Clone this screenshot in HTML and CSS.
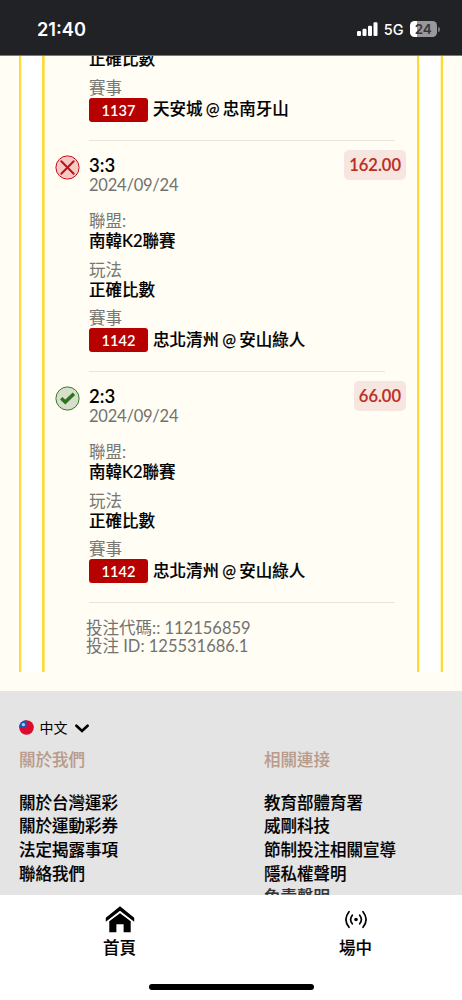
FILE: index.html
```html
<!DOCTYPE html>
<html lang="zh-Hant">
<head>
<meta charset="utf-8">
<title>投注紀錄</title>
<link rel="stylesheet" href="styles.css">
</head>
<body>
<div class="phone">
  <header class="status">
    <span class="clock">21:40</span>
    <div class="indicators">
      <svg class="signal" width="21" height="14" viewBox="0 0 21 14" fill="#fff"><rect x="0" y="9" width="4" height="5" rx="1.1"/><rect x="5.5" y="6.8" width="4" height="7.2" rx="1.1"/><rect x="11" y="3.8" width="4" height="10.2" rx="1.1"/><rect x="16.5" y="0.3" width="4" height="13.7" rx="1.1"/></svg>
      <span class="network">5G</span>
      <div class="battery"><span>24</span></div><i class="battery-cap"></i>
    </div>
  </header>
  <main class="page">
    <section class="outer"><div class="inner">
      <article class="bet first">
        <div class="value">正確比數</div>
        <div class="label">賽事</div>
        <div class="match"><span class="code">1137</span><span>天安城 @ 忠南牙山</span></div>
      </article>
      <hr class="rule">
      <article class="bet">
        <div class="head">
          <svg class="mark" width="25" height="25" viewBox="0 0 25 25" fill="none"><circle cx="12.5" cy="12.5" r="11.6" fill="#f5cac6" stroke="#bd1118"/><path d="M6.3 6.3 18.7 18.7M18.7 6.3 6.3 18.7" stroke="#bd1118" stroke-width="2" stroke-linecap="round"/></svg>
          <div class="pick"><div class="score">3:3</div><div class="date">2024/09/24</div></div>
          <span class="odds">162.00</span>
        </div>
        <div class="label">聯盟:</div><div class="value">南韓K2聯賽</div>
        <div class="label">玩法</div><div class="value">正確比數</div>
        <div class="label">賽事</div>
        <div class="match"><span class="code">1142</span><span>忠北清州 @ 安山綠人</span></div>
      </article>
      <hr class="rule short">
      <article class="bet">
        <div class="head">
          <svg class="mark" width="25" height="25" viewBox="0 0 25 25" fill="none"><circle cx="12.5" cy="12.5" r="11.6" fill="#d6dfca" stroke="#347c28"/><path d="M6.2 12.3 10.3 16 18.9 7.8" stroke="#2b741d" stroke-width="3.5"/></svg>
          <div class="pick"><div class="score">2:3</div><div class="date">2024/09/24</div></div>
          <span class="odds">66.00</span>
        </div>
        <div class="label">聯盟:</div><div class="value">南韓K2聯賽</div>
        <div class="label">玩法</div><div class="value">正確比數</div>
        <div class="label">賽事</div>
        <div class="match"><span class="code">1142</span><span>忠北清州 @ 安山綠人</span></div>
      </article>
      <hr class="rule">
      <div class="ids"><div>投注代碼:: 112156859</div><div>投注 ID: 125531686.1</div></div>
    </div></section>
    <footer class="footer">
      <div class="lang">
        <svg width="15" height="15" viewBox="0 0 15 15"><circle cx="7.5" cy="7.5" r="7.3" fill="#dc0a2d"/><path d="M7.5 .2V7.5H.2A7.3 7.3 0 0 1 7.5 .2Z" fill="#1559b5"/><circle cx="4.4" cy="4.6" r="1.7" fill="#a9cdf0"/></svg>
        <span>中文</span>
        <svg class="chevron" width="14" height="9" viewBox="0 0 14 9"><path d="M1.4 1.7 7 7 12.6 1.7" fill="none" stroke="#000" stroke-width="2.6" stroke-linecap="round"/></svg>
      </div>
      <div class="columns">
        <div><h2>關於我們</h2><ul><li>關於台灣運彩</li><li>關於運動彩券</li><li>法定揭露事項</li><li>聯絡我們</li></ul></div>
        <div><h2>相關連接</h2><ul><li>教育部體育署</li><li>威剛科技</li><li>節制投注相關宣導</li><li>隱私權聲明</li><li class="faded">免責聲明</li></ul></div>
      </div>
    </footer>
  </main>
  <nav class="tabs">
    <div class="tabrow">
      <div class="tab home">
        <svg width="30" height="27" viewBox="0 0 30 27"><path d="M.8 11.8 15 .3 29.2 11.8V15.7L15 4.7.8 15.7Z"/><path d="M4.3 15.2 15 7.2 25.7 15.2V26.2H18.6V18.2H11.4V26.2H4.3Z"/></svg>
        <span>首頁</span>
      </div>
      <div class="tab live">
        <svg width="24" height="27" viewBox="0 0 24 27" fill="none" stroke="#000" stroke-width="1.7" stroke-linecap="round"><circle cx="12" cy="13.5" r="1.8" fill="#000" stroke="none"/><path d="M8.3 9.2Q4.9 13.5 8.3 17.8M15.7 9.2Q19.1 13.5 15.7 17.8M5 5.7Q-1.2 13.5 5 21.3M19 5.7Q25.2 13.5 19 21.3"/></svg>
        <span>場中</span>
      </div>
    </div>
    <div class="indicator"></div>
  </nav>
</div>
</body>
</html>
```
FILE: styles.css
```css
* { box-sizing: border-box; }
body { margin: 0; font-family: Lato, "Noto Sans CJK TC", sans-serif; font-size: 16.5px; color: #000; }
.phone { width: 462px; height: 1000px; display: flex; flex-direction: column; overflow: hidden; background: #fffdf4; }
.status { flex: none; height: 56px; background: #212226; border-bottom: 1px solid #77777a; display: flex; justify-content: space-between; align-items: flex-start; padding: 17px 22px 0 37px; color: #fff; font-family: Inter, sans-serif; }
.clock { font-size: 18.2px; line-height: 25px; font-weight: 600; }
.indicators { display: flex; align-items: center; height: 24px; }
.network { font-size: 14.5px; font-weight: 500; margin: 1px 6px 0 6px; }
.battery { width: 27.5px; height: 16px; border-radius: 4.5px; background: linear-gradient(90deg, #fff 7px, #99999b 7px); color: #35363a; font-size: 13.5px; line-height: 16px; font-weight: 600; text-align: center; }
.battery-cap { width: 2px; height: 5px; margin-left: 1px; background: #77777a; border-radius: 0 2px 2px 0; }
.page { flex: 1; min-height: 0; overflow: hidden; display: flex; flex-direction: column; }
.outer { flex: none; height: 616px; margin: 0 19px; padding: 0 22px 0 21px; background: #fff; border: solid #ffdb35; border-width: 0 2px; box-shadow: inset .5px 0 #ffe98a, inset -.5px 0 #ffe98a; overflow: hidden; }
.inner { height: 100%; background: #fffdf4; border: solid #ffdb35; border-width: 0 2px; box-shadow: .5px 0 #ffe98a, inset 1px 0 #ffe37a; padding: 0 11px 0 45px; }
.bet { height: 230px; padding-top: 9px; }
.first { height: 84px; padding: 0; overflow: hidden; }
.first .value { margin-top: -7px; }
.rule { border: 0; height: 1px; margin: 0 11px 0 0; background: #e8e4df; }
.short { margin-right: 21px; }
.head { display: flex; margin: 0 0 16px -34px; height: 45px; align-items: flex-start; }
.mark { flex: none; margin: 5px 9px 0 0; }
.pick { flex: 1; padding-top: 5px; }
.score { font-weight: 600; font-size: 18.5px; line-height: 20px; }
.date { color: #727270; line-height: 20px; letter-spacing: -.22px; }
.odds { height: 30px; padding: 0 5px; border-radius: 5px; background: #f7e6df; color: #ba2e23; font-size: 16.5px; font-weight: 600; line-height: 31px; -webkit-text-stroke: .15px #ba2e23; }
.label { color: #777773; line-height: 20px; height: 20px; }
.value, .match, .columns li, .tab { font-weight: 500; -webkit-text-stroke: .15px currentColor; }
.value { line-height: 20px; height: 20px; margin-bottom: 8.5px; }
.match { display: flex; align-items: center; gap: 5px; height: 24px; line-height: 25px; white-space: nowrap; word-spacing: -.9px; }
.code { width: 59px; height: 24px; border-radius: 3px; background: #b70000; color: #fff; font-size: 14.6px; font-weight: 600; text-align: center; -webkit-text-stroke: 0; }
.ids { margin: 16px 0 0 -3px; color: #727270; line-height: 18px; }
.footer { flex: 1 0 auto; margin-top: 19px; background: #e4e4e4; padding: 26px 19px 0; }
.lang { display: flex; align-items: center; height: 20px; gap: 5.5px; font-size: 14px; }
.chevron { margin-left: 2px; margin-top: 2px; }
.columns { display: grid; grid-template-columns: 245px 1fr; margin-top: 11px; }
.columns h2 { margin: 0; font-size: 16.5px; line-height: 24px; font-weight: 500; color: #b99b8b; -webkit-text-stroke: .1px #b99b8b; }
.columns ul { list-style: none; margin: 19.5px 0 0; padding: 0; line-height: 23.7px; }
.faded { color: #333; }
.tabs { flex: none; height: 105px; background: #fff; display: flex; flex-direction: column; align-items: center; }
.tabrow { width: 100%; height: 90px; display: flex; padding: 11px 0 0 4px; }
.tab { flex: none; width: 231px; display: flex; flex-direction: column; align-items: center; gap: 3px; line-height: 24px; }
.live { margin-left: 5px; }
.indicator { width: 165px; height: 6px; margin-top: -1px; border-radius: 3px; background: #000; }
```
